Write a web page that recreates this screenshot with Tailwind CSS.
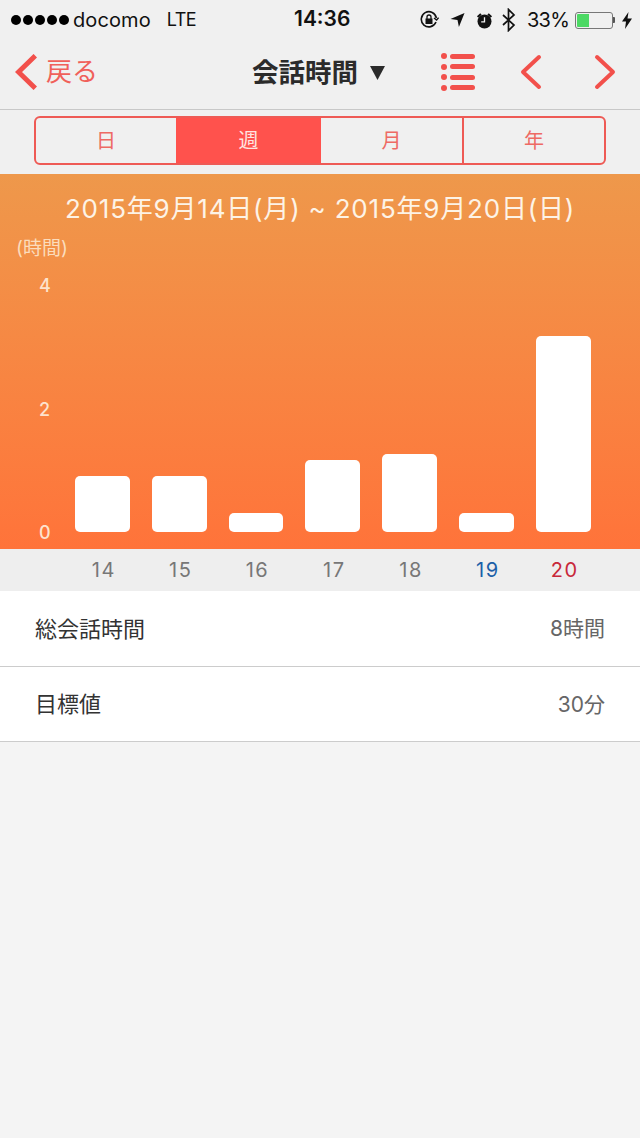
<!DOCTYPE html>
<html lang="ja">
<head>
<meta charset="UTF-8" />
<meta name="viewport" content="width=device-width, initial-scale=1.0" />
<title>会話時間</title>
<script src="https://cdn.jsdelivr.net/npm/@tailwindcss/browser@4"></script>
</head>
<body class="bg-[#f4f4f4] font-['Inter','Noto_Sans_CJK_JP',sans-serif] w-[640px] h-[1138px] overflow-hidden">

<!-- status bar -->
<div class="h-[40px] bg-[#f0f0f0] flex items-center justify-between pl-[11px] pr-[8px] text-[#111] relative">
    <div class="flex items-center">
        <div class="flex gap-[2px]">
            <span class="w-[10px] h-[10px] rounded-full bg-black"></span>
            <span class="w-[10px] h-[10px] rounded-full bg-black"></span>
            <span class="w-[10px] h-[10px] rounded-full bg-black"></span>
            <span class="w-[10px] h-[10px] rounded-full bg-black"></span>
            <span class="w-[10px] h-[10px] rounded-full bg-black"></span>
        </div>
        <span class="text-[20px] ml-[4px] leading-none tracking-[0.1px]">docomo</span>
        <span class="text-[18px] ml-[16px] leading-none tracking-[-0.6px]">LTE</span>
    </div>
    <span class="absolute left-[294px] top-[7px] text-[21px] font-semibold leading-[24px]">14:36</span>
    <div class="flex items-center">
        <svg width="20" height="20" viewBox="0 0 20 20" fill="none" stroke="#111" stroke-width="1.6"><path d="M17 12a7.6 7.6 0 1 1 .4-4" /><path d="M15 8l2.600 2 2-2.400" stroke-width="1.4"/><rect x="6.500" y="8.500" width="7" height="5.500" fill="#111" stroke="none"/><path d="M8 9V7a2 2 0 0 1 4 0v2" stroke-width="1.3"/></svg>
        <svg class="ml-[11px]" width="15" height="16" viewBox="0 0 16 16" fill="#111"><path d="M15.500 .5L9.500 15.500 8 8 .5 7z"/></svg>
        <svg class="ml-[11px]" width="17" height="17" viewBox="0 0 18 18" fill="#111"><circle cx="9" cy="10" r="7.400"/><path d="M1 4.500L4.500 1.300 6 2.800 2.500 6zM17 4.500L13.500 1.300 12 2.800 15.500 6z"/><path d="M9 5.500V10.500H5.500" fill="none" stroke="#f0f0f0" stroke-width="1.400"/></svg>
        <svg class="ml-[9px]" width="14" height="24" viewBox="0 0 14 24" fill="none" stroke="#111" stroke-width="1.700"><path d="M1 7l11 10-5.500 5.500V1.500L12 7 1 17"/></svg>
        <span class="text-[20px] ml-[11px] leading-none tracking-[-0.8px]">33%</span>
        <div class="ml-[6px] w-[38px] h-[17px] rounded-[3px] border border-[#777] p-[1px] flex">
            <div class="w-[12px] bg-[#4cd964] rounded-l-[1px]"></div>
        </div>
        <div class="w-[2px] h-[6px] bg-[#555] rounded-r-[1px]"></div>
        <svg class="ml-[7px]" width="10" height="17" viewBox="0 0 10 17" fill="#111"><path d="M6.500 0L0 9.500H4L3 17 10 6.500H5.500z"/></svg>
    </div>
</div>

<!-- nav bar -->
<div class="h-[70px] bg-[#f0f0f0] border-b border-[#c8c8c8] flex items-center relative pb-[5px]">
    <div class="flex items-center pl-[15px] w-[200px]">
        <svg width="22" height="36" viewBox="0 0 22 36" fill="none" stroke="#f2504b" stroke-width="5" stroke-linecap="square"><path d="M18.500 3.500L3.500 18 18.500 32.500"/></svg>
        <span class="text-[26px] text-[#f0605a] ml-[9px] leading-none">戻る</span>
    </div>
    <div class="flex items-center ml-[52px]">
        <span class="text-[26.500px] font-bold text-[#2b2b2b] leading-none">会話時間</span>
        <svg class="ml-[12px]" width="15" height="15" viewBox="0 0 15 15" fill="#2b2b2b"><path d="M0 1H15L7.500 15z"/></svg>
    </div>
    <div class="flex flex-col gap-[4.500px] ml-[56px]">
        <div class="flex items-center gap-[3px]"><span class="w-[6px] h-[6px] rounded-full bg-[#f2504b]"></span><span class="w-[25px] h-[5px] rounded-full bg-[#f2504b]"></span></div>
        <div class="flex items-center gap-[3px]"><span class="w-[6px] h-[6px] rounded-full bg-[#f2504b]"></span><span class="w-[25px] h-[5px] rounded-full bg-[#f2504b]"></span></div>
        <div class="flex items-center gap-[3px]"><span class="w-[6px] h-[6px] rounded-full bg-[#f2504b]"></span><span class="w-[25px] h-[5px] rounded-full bg-[#f2504b]"></span></div>
        <div class="flex items-center gap-[3px]"><span class="w-[6px] h-[6px] rounded-full bg-[#f2504b]"></span><span class="w-[25px] h-[5px] rounded-full bg-[#f2504b]"></span></div>
    </div>
    <svg class="ml-[45px]" width="22" height="36" viewBox="0 0 22 36" fill="none" stroke="#f2504b" stroke-width="4" stroke-linecap="round" stroke-linejoin="round"><path d="M19 3L3 18 19 33"/></svg>
    <svg class="ml-[52px]" width="22" height="36" viewBox="0 0 22 36" fill="none" stroke="#f2504b" stroke-width="4" stroke-linecap="round" stroke-linejoin="round"><path d="M3 3L19 18 3 33"/></svg>
</div>

<!-- segmented control -->
<div class="h-[64px] bg-[#f0f0f0] pt-[6px] px-[34px]">
    <div class="h-[49px] flex rounded-[6px] border-2 border-[#ee5a55] overflow-hidden text-[20px] text-[#ee6a64] leading-none">
        <div class="w-[140px] flex items-center justify-center">日</div>
        <div class="w-[145px] flex items-center justify-center bg-[#ff524d] text-[#ffe4e0]">週</div>
        <div class="w-[143px] flex items-center justify-center border-r-2 border-[#ee5a55]">月</div>
        <div class="flex-1 flex items-center justify-center">年</div>
    </div>
</div>

<!-- chart -->
<div class="h-[375px] bg-gradient-to-b from-[#ee984b] to-[#ff733a] flex flex-col">
    <div class="text-center text-[26px] tracking-[0.8px] text-[#fdf3e6] leading-[30px] mt-[20px]">2015年9月14日(月) ~ 2015年9月20日(日)</div>
    <div class="pl-[16px] text-[19px] text-[#fbdcbc] leading-[22px] mt-[14px]">(時間)</div>
    <div class="flex mt-[14px]">
        <div class="w-[75px] h-[270px] flex flex-col justify-between items-start pl-[39px] pt-[1px] text-[18px] text-[#fde3cd] font-medium leading-[22px]">
            <span>4</span>
            <span>2</span>
            <span>0</span>
        </div>
        <div class="h-[258px] flex items-end gap-[22px]">
            <div class="w-[55px] h-[56px] bg-white rounded-[5px]"></div>
            <div class="w-[55px] h-[56px] bg-white rounded-[5px]"></div>
            <div class="w-[54px] h-[19px] bg-white rounded-[5px]"></div>
            <div class="w-[55px] h-[72px] bg-white rounded-[5px]"></div>
            <div class="w-[55px] h-[78px] bg-white rounded-[5px]"></div>
            <div class="w-[55px] h-[19px] bg-white rounded-[5px]"></div>
            <div class="w-[55px] h-[196px] bg-white rounded-[5px]"></div>
        </div>
    </div>
</div>

<!-- day axis -->
<div class="h-[42px] bg-[#eeeeee] flex pl-[65.500px] items-center text-[20px] text-[#777] tracking-[1.5px]">
    <span class="w-[76.800px] text-center">14</span>
    <span class="w-[76.800px] text-center">15</span>
    <span class="w-[76.800px] text-center">16</span>
    <span class="w-[76.800px] text-center">17</span>
    <span class="w-[76.800px] text-center">18</span>
    <span class="w-[76.800px] text-center text-[#1c5fa8]">19</span>
    <span class="w-[76.800px] text-center text-[#c8283a]">20</span>
</div>

<!-- summary rows -->
<div class="bg-white">
    <div class="h-[76px] flex items-center justify-between pt-[1px] px-[35px] border-b border-[#cccccc] text-[22px] text-[#333]">
        <span>総会話時間</span>
        <span class="text-[21px] text-[#666]">8時間</span>
    </div>
    <div class="h-[75px] flex items-center justify-between pt-[1px] px-[35px] border-b border-[#cccccc] text-[22px] text-[#333]">
        <span>目標値</span>
        <span class="text-[21px] text-[#666]">30分</span>
    </div>
</div>

</body>
</html>
